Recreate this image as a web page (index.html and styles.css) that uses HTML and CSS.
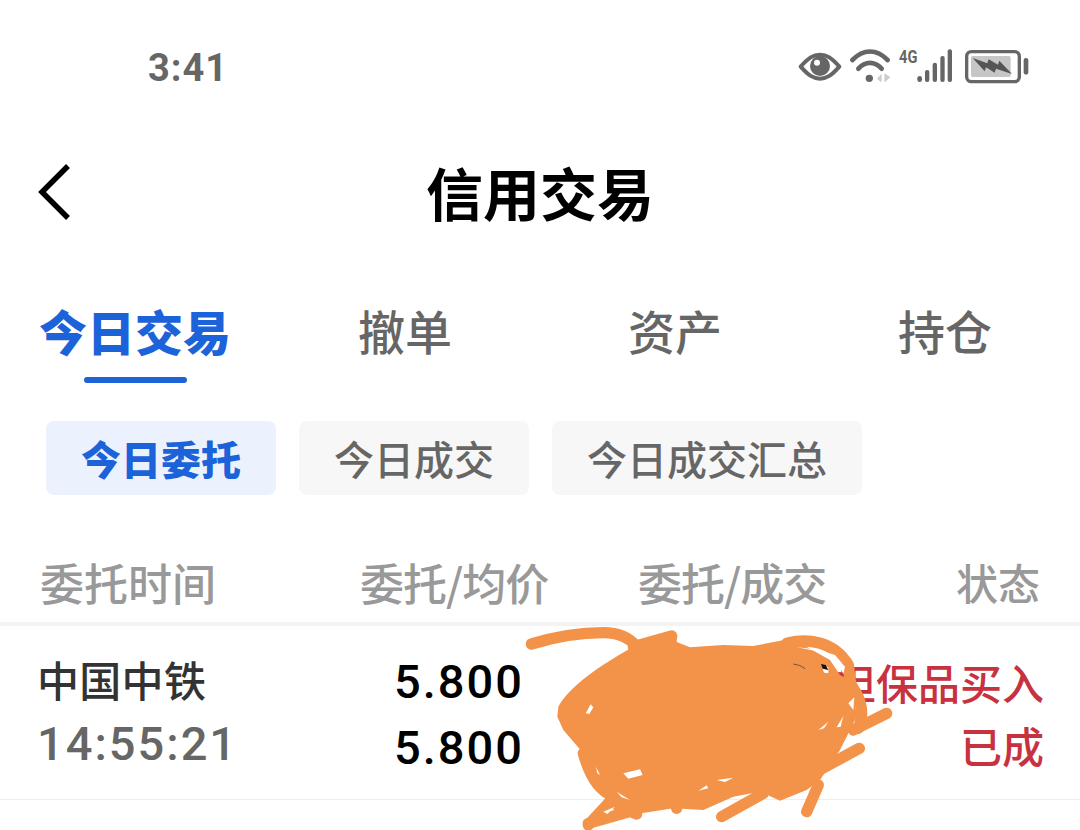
FILE: index.html
```html
<!DOCTYPE html>
<html lang="zh-CN">
<head>
    <meta charset="UTF-8">
    <meta name="viewport" content="width=device-width, initial-scale=1.0">
    <title>信用交易</title>
    <link rel="stylesheet" href="styles.css">
</head>
<body>
    <div class="page">
        <div class="status-bar">
            <span class="clock">3:41</span>
            <svg class="status-icons" viewBox="0 0 810 210" width="270" height="70">
                <!-- eye -->
                <path d="M62 110C85 84 100 74 120 74S155 84 178 110C155 136 140 146 120 146S85 136 62 110Z" fill="none" stroke="#666" stroke-width="12" stroke-linejoin="round"/>
                <circle cx="120" cy="108" r="30" fill="#666"/>
                <circle cx="111" cy="98" r="9" fill="#fff"/>
                <!-- wifi -->
                <path d="M217 90C250 56 290 56 323 90" fill="none" stroke="#666" stroke-width="14" stroke-linecap="round"/>
                <path d="M235 116C256 93 284 93 305 116" fill="none" stroke="#666" stroke-width="14" stroke-linecap="round"/>
                <circle cx="268" cy="145" r="11" fill="#666"/>
                <path d="M291 146L305 131V155H302ZM313 131L316 131L331 142L316 155H313Z" fill="#ccc"/>
                <text class="net-label" x="357" y="100" textLength="55" lengthAdjust="spacingAndGlyphs">4G</text>
                <!-- signal -->
                <g fill="#666">
                    <rect x="412" y="138" width="14" height="18" rx="7"/>
                    <rect x="435" y="120" width="13" height="36" rx="6"/>
                    <rect x="458" y="98" width="13" height="58" rx="6"/>
                    <rect x="481" y="78" width="13" height="78" rx="6"/>
                    <rect x="503" y="58" width="13" height="98" rx="6"/>
                </g>
                <!-- battery -->
                <rect x="560" y="65" width="158" height="90" rx="14" fill="none" stroke="#666" stroke-width="10"/>
                <rect x="573" y="78" width="119" height="63" rx="5" fill="#c6c6c6"/>
                <path d="M578 84L622 100L626 88L654 104L658 92L696 132L648 116L644 128L618 112L614 124Z" fill="#555"/>
                <rect x="731" y="84" width="14" height="50" rx="7" fill="#666"/>
            </svg>
        </div>

        <div class="nav-bar">
            <svg class="back-icon" viewBox="0 0 34 58" width="34" height="58">
                <path d="M30 3L4 29L30 55" fill="none" stroke="#000" stroke-width="5.5"/>
            </svg>
            <h1 class="nav-title">信用交易</h1>
        </div>

        <div class="tabs">
            <div class="tab tab-active">今日交易</div>
            <div class="tab">撤单</div>
            <div class="tab">资产</div>
            <div class="tab">持仓</div>
        </div>

        <div class="chips">
            <div class="chip chip-active">今日委托</div>
            <div class="chip">今日成交</div>
            <div class="chip">今日成交汇总</div>
        </div>

        <div class="table-head">
            <span>委托时间</span>
            <span class="head-slash">委托/均价</span>
            <span class="head-slash">委托/成交</span>
            <span class="cell-right">状态</span>
        </div>

        <div class="order-row">
            <div class="order-name">
                <div class="stock">中国中铁</div>
                <div class="time">14:55:21</div>
            </div>
            <div class="order-price">
                <div>5.800</div>
                <div>5.800</div>
            </div>
            <div class="order-state">
                <div>担保品买入</div>
                <div>已成</div>
            </div>
        </div>

        <!-- hand drawn scribble over the row -->
        <svg class="scribble" viewBox="0 0 1200 660" width="400" height="220">
            <g fill="none" stroke="#f39249" stroke-width="34" stroke-linecap="round" stroke-linejoin="round">
                <path d="M34 102C90 85 170 68 250 68C300 68 330 85 350 110"/>
                <path d="M340 110L455 78L450 115"/>
                <path d="M800 100C860 85 940 90 985 165C990 195 985 215 1000 235C1030 280 1030 320 1015 355"/>
                <path d="M1000 360L1100 310"/>
                <path d="M880 490L1018 415"/>
                <path d="M605 620L730 550"/>
                <path d="M860 605L895 525"/>
                <path d="M205 645L270 575"/>
                <path d="M205 640L345 600"/>
                <path d="M270 575L350 612"/>
                <path d="M470 595L460 550"/>
                <path d="M190 430C210 500 240 560 320 570"/>
            </g>
            <path fill="#f39249" d="M115 290C150 230 230 170 360 100L455 90L510 112L610 105L700 108L820 85L850 105L930 150L960 195L1000 215L1010 320L960 420L900 510L860 540L780 572L720 545L640 560L550 600L460 595L350 612L260 575L190 430L130 360L112 320Z"/>
            <g fill="#fff">
                <path d="M830 112L890 118L945 135L975 170L970 192L950 155L900 125Z"/>
                <path d="M310 490L360 478L368 495L325 506Z"/>
                <path d="M197 310L212 283L220 292L208 312Z"/>
                <path d="M590 510L640 503L615 516Z"/>
                <path d="M535 542L560 526L565 535Z"/>
                <path d="M895 360L925 335L912 355Z"/>
                <path d="M950 352L970 318L962 350Z"/>
                <path d="M985 280L1003 262L1000 300Z"/>
                <path d="M905 165L925 172L925 190L912 188Z"/>
                <path d="M250 605L285 590L262 612Z"/>
                <path d="M228 470L240 495L232 490Z"/>
                <path d="M290 545L330 570L305 562Z"/>
            </g>
            <path d="M903 162L917 165L925 180L908 176Z" fill="#111"/>
            <path d="M820 162Q840 164 856 176" fill="none" stroke="#333" stroke-width="2"/>
        </svg>
    </div>
</body>
</html>
```

FILE: styles.css
```css
* {
    box-sizing: border-box;
}
html, body {
    margin: 0;
    padding: 0;
    background-color: #fff;
}
body {
    font-family: "Noto Sans CJK SC", "Noto Sans", sans-serif;
    overflow: hidden;
}
.page {
    position: relative;
    width: 1080px;
    height: 830px;
    overflow: hidden;
}
.status-bar {
    display: flex;
    justify-content: space-between;
    align-items: center;
    height: 136px;
    padding: 0 30px 0 148px;
}
.status-icons {
    margin-bottom: 6px;
}
.clock {
    font-family: Roboto, sans-serif;
    font-size: 38px;
    font-weight: 700;
    letter-spacing: 1px;
    color: #666;
}
.net-label {
    font-family: Roboto, sans-serif;
    font-size: 56px;
    font-weight: 700;
    fill: #666;
}
.nav-bar {
    display: flex;
    align-items: center;
    justify-content: center;
    position: relative;
    height: 114px;
}
.back-icon {
    position: absolute;
    left: 38px;
    top: 27px;
}
.nav-title {
    margin: -4px 0 0;
    font-size: 57px;
    font-weight: 700;
    line-height: 114px;
    color: #000;
}
.tabs {
    display: grid;
    grid-template-columns: repeat(4, 270px);
    height: 134px;
    padding-top: 43px;
}
.tab {
    position: relative;
    text-align: center;
    font-size: 47px;
    font-weight: 500;
    line-height: 74px;
    color: #666;
}
.tab-active {
    font-size: 48px;
    font-weight: 900;
    color: #1c62d8;
}
.tab-active::after {
    content: "";
    position: absolute;
    left: 84px;
    top: 84px;
    width: 103px;
    height: 6px;
    border-radius: 3px;
    background-color: #1c62d8;
}
.chips {
    display: flex;
    gap: 23px;
    margin-top: 37px;
    padding-left: 46px;
}
.chip {
    height: 74px;
    padding: 0 35px;
    border-radius: 8px;
    background-color: #f7f7f7;
    font-size: 40px;
    font-weight: 500;
    line-height: 74px;
    color: #666;
}
.chip-active {
    background-color: #ebf2fd;
    color: #1c62d8;
    font-weight: 900;
}
.table-head {
    display: grid;
    grid-template-columns: 320px 278px 318px 84px;
    height: 131px;
    padding: 51px 0 0 40px;
    border-bottom: 4px solid #f3f3f3;
    font-size: 44px;
    font-weight: 500;
    line-height: 72px;
    color: #999;
}
.table-head span {
    white-space: nowrap;
}
.head-slash {
    letter-spacing: -1px;
}
.cell-right {
    font-size: 42px;
    text-align: right;
}
.order-row {
    display: flex;
    justify-content: space-between;
    height: 174px;
    padding: 20px 36px 0 37px;
    border-bottom: 1px solid #eee;
}
.order-name {
    width: 357px;
}
.stock {
    font-size: 42px;
    font-weight: 500;
    letter-spacing: 0.3px;
    line-height: 66px;
    color: #333;
}
.time {
    margin-top: 3px;
    font-family: Roboto, sans-serif;
    font-size: 47px;
    font-weight: 500;
    letter-spacing: 2px;
    line-height: 58px;
    color: #666;
}
.order-price {
    flex: 1;
    padding-top: 3px;
    font-family: Roboto, sans-serif;
    font-size: 47px;
    font-weight: 500;
    letter-spacing: 2px;
    line-height: 66px;
    color: #000;
}
.order-state {
    padding-top: 4px;
    font-size: 42px;
    font-weight: 500;
    line-height: 63px;
    text-align: right;
    color: #c8323f;
}
.scribble {
    position: absolute;
    left: 520px;
    top: 610px;
}
```
